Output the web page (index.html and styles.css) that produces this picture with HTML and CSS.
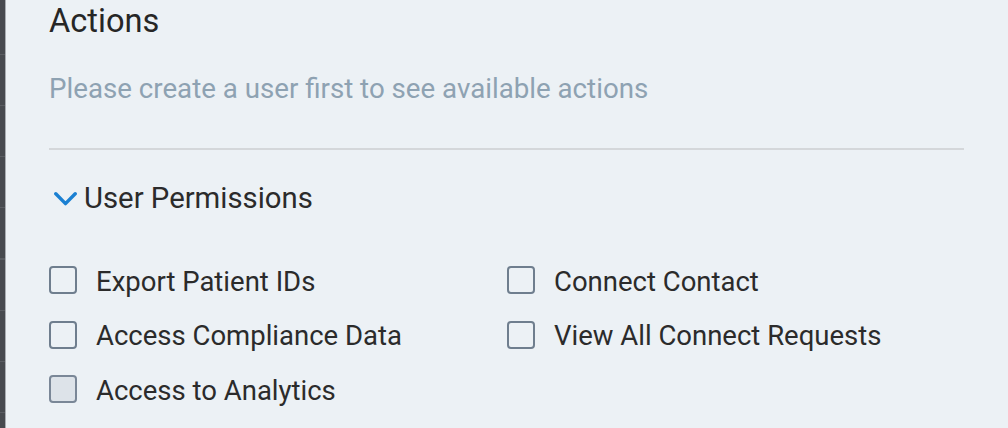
FILE: index.html
```html
<!DOCTYPE html>
<html lang="en">
<head>
<meta charset="utf-8">
<title>Actions</title>
<link rel="stylesheet" href="styles.css">
</head>
<body>
<div class="frame">
  <div class="rail"></div>
  <main class="panel">
    <h1 class="title">Actions</h1>
    <p class="hint">Please create a user first to see available actions</p>
    <hr class="divider">
    <div class="section-head">
      <svg class="chevron" width="23" height="14" viewBox="0 0 23 14" aria-hidden="true">
        <path d="M1.8 1.8 L11.5 11.6 L21.2 1.8" fill="none" stroke="#1b80d2" stroke-width="3.4" stroke-linecap="round" stroke-linejoin="round"/>
      </svg>
      <span class="section-title">User Permissions</span>
    </div>
    <div class="perms">
      <label class="perm"><span class="box"></span><span class="perm-text">Export Patient IDs</span></label>
      <label class="perm"><span class="box"></span><span class="perm-text">Connect Contact</span></label>
      <label class="perm"><span class="box"></span><span class="perm-text">Access Compliance Data</span></label>
      <label class="perm"><span class="box"></span><span class="perm-text">View All Connect Requests</span></label>
      <label class="perm"><span class="box box-disabled"></span><span class="perm-text">Access to Analytics</span></label>
    </div>
  </main>
</div>
</body>
</html>
```

FILE: styles.css
```css
* { box-sizing: border-box; }

html, body {
  margin: 0;
  padding: 0;
  height: 100%;
}

body {
  font-family: Roboto, "Liberation Sans", sans-serif;
  background: #ecf1f5;
  overflow: hidden;
}

.frame {
  display: flex;
  height: 428px;
}

.rail {
  width: 6px;
  flex: none;
  background-color: #474a4f;
  background-image: repeating-linear-gradient(to bottom, transparent 0, transparent 50px, #5a5d62 50px, #5a5d62 51.1px);
  background-position: 0 4px;
  border-right: 1px solid #a9adb2;
}

.panel {
  flex: 1;
  padding: 2px 44px 0 43px;
  background: #ecf1f5;
}

.title {
  margin: 0;
  font-size: 32.6px;
  line-height: 38px;
  font-weight: 400;
  color: #262626;
}

.hint {
  margin: 33px 0 0;
  font-size: 27.7px;
  line-height: 32px;
  color: #8ea2b2;
}

.divider {
  margin: 43px 0 0;
  border: 0;
  height: 2px;
  background: #d4d7da;
}

.section-head {
  display: flex;
  align-items: center;
  gap: 7px;
  margin-top: 32px;
  padding-left: 5px;
  height: 32px;
}

.chevron { flex: none; margin-top: 1px; }

.section-title {
  font-size: 29.3px;
  line-height: 32px;
  color: #2b2b2b;
}

.perms {
  display: grid;
  grid-template-columns: 458px 1fr;
  grid-auto-rows: 28px;
  row-gap: 26.7px;
  margin-top: 52px;
}

.perm {
  display: flex;
  align-items: center;
  gap: 19px;
}

.box {
  flex: none;
  width: 28px;
  height: 28px;
  border: 2px solid #6f7e8e;
  border-radius: 4px;
  background: transparent;
}

.box-disabled {
  background: #dde3e9;
  border-color: #7a8797;
}

.perm-text {
  font-size: 27.5px;
  line-height: 32px;
  padding-top: 3px;
  color: #2b2b2b;
  white-space: nowrap;
}
```
